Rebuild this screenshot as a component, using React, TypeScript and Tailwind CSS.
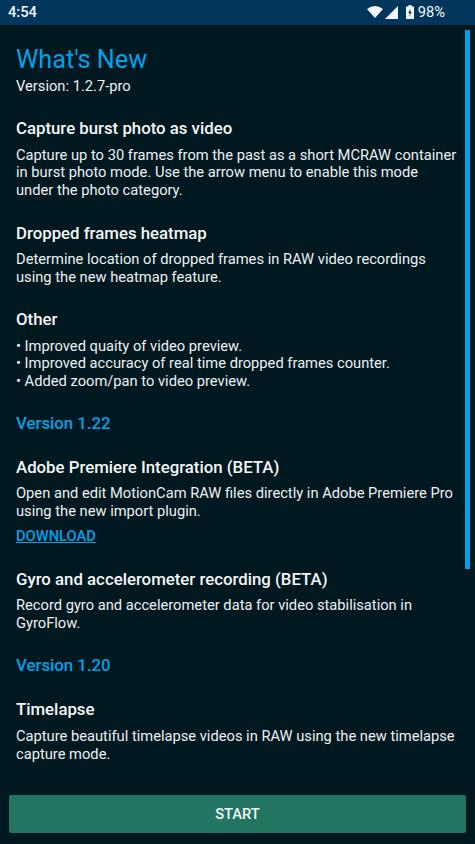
const Heading = ({ children, className = '' }: { children: React.ReactNode; className?: string }) => (
  <h3 className={`text-[16.8px] leading-[20px] font-medium text-[#f5f7f7] ${className}`}>{children}</h3>
);

const Body = ({ children }: { children: React.ReactNode }) => (
  <p className="mt-[8.5px] text-[14.7px] leading-[17.7px] text-[#eef1f2]">{children}</p>
);

const VersionTitle = ({ children, className = '' }: { children: React.ReactNode; className?: string }) => (
  <h2 className={`text-[16.8px] leading-[20px] font-medium text-[#00a2e8] ${className}`}>{children}</h2>
);

function StatusBar() {
  return (
    <div className="h-[25px] shrink-0 bg-[#00365c] flex items-center justify-between pl-[8px] pr-[30px] text-[#f4f7f9] text-[14.7px]">
      <span className="font-medium">4:54</span>
      <div className="flex items-center">
        <svg width="16" height="12" viewBox="0 0 16 12" className="mr-[2px]">
          <path d="M0 3 Q8 -3 16 3 L8 12 Z" fill="currentColor" />
        </svg>
        <svg width="13" height="13" viewBox="0 0 13 13" className="mr-[8px]">
          <path d="M13 0 V13 H0 Z" fill="currentColor" />
        </svg>
        <svg width="8" height="14" viewBox="0 0 8 14" className="mr-[4px]">
          <path d="M2.5 0 H5.5 V1.5 H8 V14 H0 V1.5 H2.5 Z" fill="currentColor" />
          <path d="M4.6 3.5 L2.2 8 H3.7 L3.3 11.5 L5.8 6.8 H4.2 Z" fill="#00365c" />
        </svg>
        <span>98%</span>
      </div>
    </div>
  );
}

export default function App() {
  return (
    <div
      className="relative w-[475px] h-[844px] overflow-hidden bg-[#001820] flex flex-col"
      style={{ fontFamily: 'Roboto, sans-serif' }}
    >
      <StatusBar />

      <div className="flex-1 min-h-0 overflow-hidden pl-[16px] pr-[18px] pt-[18px]">
        <h1 className="text-[25.2px] leading-[34px] text-[#00a2e8]">What's New</h1>
        <p className="mt-[1px] text-[14.7px] leading-[17.5px] text-[#eef1f2]">Version: 1.2.7-pro</p>

        <Heading className="mt-[22.5px]">Capture burst photo as video</Heading>
        <Body>
          Capture up to 30 frames from the past as a short MCRAW container in burst photo mode. Use the arrow menu to enable this mode under the photo category.
        </Body>

        <Heading className="mt-[23px]">Dropped frames heatmap</Heading>
        <Body>
          Determine location of dropped frames in RAW video recordings using the new heatmap feature.
        </Body>

        <Heading className="mt-[22.5px]">Other</Heading>
        <Body>
          • Improved quaity of video preview.
          <br />• Improved accuracy of real time dropped frames counter.
          <br />• Added zoom/pan to video preview.
        </Body>

        <VersionTitle className="mt-[22px]">Version 1.22</VersionTitle>

        <Heading className="mt-[24px]">Adobe Premiere Integration (BETA)</Heading>
        <Body>
          Open and edit MotionCam RAW files directly in Adobe Premiere Pro using the new import plugin.
        </Body>
        <a className="block mt-[7.5px] text-[14.7px] leading-[17.5px] font-medium text-[#00a2e8] underline">DOWNLOAD</a>

        <Heading className="mt-[23px]">Gyro and accelerometer recording (BETA)</Heading>
        <Body>
          Record gyro and accelerometer data for video stabilisation in GyroFlow.
        </Body>

        <VersionTitle className="mt-[23px]">Version 1.20</VersionTitle>

        <Heading className="mt-[24px]">Timelapse</Heading>
        <Body>
          Capture beautiful timelapse videos in RAW using the new timelapse capture mode.
        </Body>
      </div>

      {/* scrollbar thumb */}
      <div className="absolute left-[465px] top-[30px] w-[5px] h-[539px] bg-[#00a2e8]" />

      <div className="shrink-0 px-[9px] pb-[11px] pt-[11px]">
        <button className="w-full h-[38px] rounded-[2px] bg-[#227560] text-[14.7px] font-medium text-[#f2f6f5]">
          START
        </button>
      </div>
    </div>
  );
}
